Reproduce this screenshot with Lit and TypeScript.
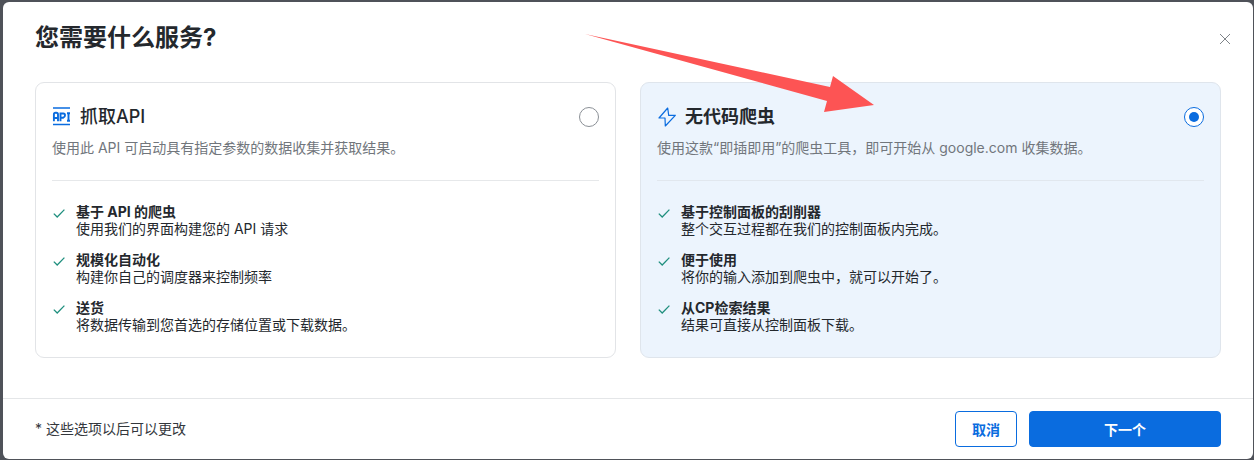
import { LitElement, html, css, svg } from "lit";
import { customElement } from "lit/decorators.js";

const check = html`<svg class="check" viewBox="0 0 14 14" width="14" height="14" fill="none" stroke="#1f8f7e" stroke-width="1.3"><path d="M1.8 7.6 5.2 11 12.4 3.6"/></svg>`;

const cards = [
  {
    selected: false,
    icon: html`<svg class="icon" viewBox="0 0 20 20" width="20" height="20" fill="none"><path d="M1 1h17M1 17.500h17" stroke="#0a6cdf" stroke-width="1.500"/><path d="M1.900 14.200V7.500Q1.900 5.800 3.500 5.800H4.300Q6 5.800 6 7.500V14.200M1.900 11H6M8.500 14.200V6.500H11.300Q13 6.500 13 8.300T11.300 10.700H8.500M15 6.300H18M16.500 6.300V13.700M15 13.700H18" stroke="#0a6cdf" stroke-width="1.900"/></svg>`,
    title: "抓取API",
    desc: "使用此 API 可启动具有指定参数的数据收集并获取结果。",
    items: [
      ["基于 API 的爬虫", "使用我们的界面构建您的 API 请求"],
      ["规模化自动化", "构建你自己的调度器来控制频率"],
      ["送货", "将数据传输到您首选的存储位置或下载数据。"],
    ],
  },
  {
    selected: true,
    icon: html`<svg class="icon" viewBox="0 0 20 20" width="20" height="20" fill="none" stroke="#0a6cdf" stroke-width="1.200" stroke-linejoin="round"><path d="M10.700 1 2 11H8L8.300 19 18.300 8.300H11.700L10.700 1Z"/></svg>`,
    title: "无代码爬虫",
    desc: "使用这款“即插即用”的爬虫工具，即可开始从 google.com 收集数据。",
    items: [
      ["基于控制面板的刮削器", "整个交互过程都在我们的控制面板内完成。"],
      ["便于使用", "将你的输入添加到爬虫中，就可以开始了。"],
      ["从CP检索结果", "结果可直接从控制面板下载。"],
    ],
  },
];

@customElement("app-root")
export class AppRoot extends LitElement {
  static styles = css`
    :host {
      display: block;
      width: 1254px;
      height: 460px;
      background: #4f5259;
      position: relative;
      overflow: hidden;
      font-family: Inter, "Noto Sans CJK SC", sans-serif;
      color: #24282d;
    }
    .shell {
      padding: 2px 1px 1px 3px;
      height: 460px;
      box-sizing: border-box;
    }
    .modal {
      background: #fff;
      height: 457px;
      border-radius: 6px;
      display: flex;
      flex-direction: column;
      position: relative;
    }
    .head {
      height: 80px;
      box-sizing: border-box;
      padding: 18px 32px 0;
      display: flex;
      justify-content: space-between;
      align-items: flex-start;
    }
    h1 {
      margin: 0;
      font-size: 24px;
      line-height: 36px;
      font-weight: 700;
    }
    .close {
      margin: 13px -10px 0 0;
      display: block;
    }
    .cards {
      display: grid;
      grid-template-columns: 581px 581px;
      column-gap: 24px;
      padding: 0 32px;
    }
    .card {
      height: 276px;
      box-sizing: border-box;
      border: 1px solid #e2e4e7;
      border-radius: 9px;
      padding: 16px 16px 0;
      display: flex;
      flex-direction: column;
    }
    .card.sel {
      background: #ecf4fd;
      border-color: #dfe5ec;
    }
    .title-row {
      display: flex;
      align-items: center;
      height: 36px;
      gap: 8px;
    }
    .title {
      font-size: 18px;
      font-weight: 500;
      line-height: 36px;
      flex: 1;
    }
    .sel .title {
      font-weight: 700;
    }
    .icon {
      flex: none;
    }
    .radio {
      width: 20px;
      height: 20px;
      box-sizing: border-box;
      border: 1px solid #8b9096;
      border-radius: 50%;
      background: #fff;
      display: flex;
      align-items: center;
      justify-content: center;
    }
    .sel .radio {
      border: 1.500px solid #0a6cdf;
    }
    .dot {
      width: 10px;
      height: 10px;
      border-radius: 50%;
      background: #0a6cdf;
    }
    .desc {
      font-size: 14px;
      line-height: 20px;
      color: #71767c;
      margin: 3px 0 0;
    }
    hr {
      border: 0;
      border-top: 1px solid #e6e8ea;
      margin: 22px 0 0;
    }
    .sel hr {
      border-top-color: #e1e7ee;
    }
    ul {
      list-style: none;
      margin: 21px 0 0;
      padding: 0;
      display: flex;
      flex-direction: column;
      gap: 12px;
    }
    li {
      display: flex;
      gap: 10px;
      align-items: flex-start;
    }
    .check {
      flex: none;
      margin-top: 3.500px;
    }
    .it {
      font-size: 14px;
      line-height: 18px;
    }
    .it b {
      display: block;
      font-weight: 700;
      line-height: 20px;
      margin-bottom: -2px;
    }
    .it span {
      display: block;
    }
    .foot {
      margin-top: auto;
      height: 61px;
      box-sizing: border-box;
      border-top: 1px solid #e4e6e8;
      padding: 12px 32px 0;
      display: flex;
      align-items: flex-start;
    }
    .note {
      font-size: 14px;
      line-height: 36px;
      flex: 1;
      color: #33373c;
    }
    button {
      font: inherit;
      font-size: 14px;
      font-weight: 700;
      height: 36px;
      border-radius: 4px;
      padding: 0;
      box-sizing: border-box;
      border: 1px solid #0a6cdf;
    }
    .cancel {
      width: 62px;
      background: #fff;
      color: #0a6cdf;
      margin-right: 12px;
    }
    .next {
      width: 192px;
      background: #0a6cdf;
      color: #fff;
    }
    .arrow {
      position: absolute;
      left: 0;
      top: 0;
      pointer-events: none;
    }
  `;

  render() {
    return html`
      <div class="shell">
        <div class="modal">
          <div class="head">
            <h1>您需要什么服务?</h1>
            <svg class="close" viewBox="0 0 12 12" width="12" height="12" fill="none" stroke="#7f8489" stroke-width="1"><path d="M1 1 11 11M11 1 1 11"/></svg>
          </div>
          <div class="cards">
            ${cards.map(
              (c) => html`
                <div class="card ${c.selected ? "sel" : ""}">
                  <div class="title-row">
                    ${c.icon}
                    <div class="title">${c.title}</div>
                    <div class="radio">${c.selected ? html`<div class="dot"></div>` : ""}</div>
                  </div>
                  <p class="desc">${c.desc}</p>
                  <hr />
                  <ul>
                    ${c.items.map(
                      ([a, b]) => html`<li>${check}<div class="it"><b>${a}</b><span>${b}</span></div></li>`
                    )}
                  </ul>
                </div>
              `
            )}
          </div>
          <div class="foot">
            <div class="note">* 这些选项以后可以更改</div>
            <button class="cancel">取消</button>
            <button class="next">下一个</button>
          </div>
        </div>
      </div>
      <svg class="arrow" width="1254" height="460" viewBox="0 0 1254 460">
        ${svg`<polygon points="585,34 830,87 833,76 874,105 824,112 827,101" fill="#fd5454"/>`}
      </svg>
    `;
  }
}
